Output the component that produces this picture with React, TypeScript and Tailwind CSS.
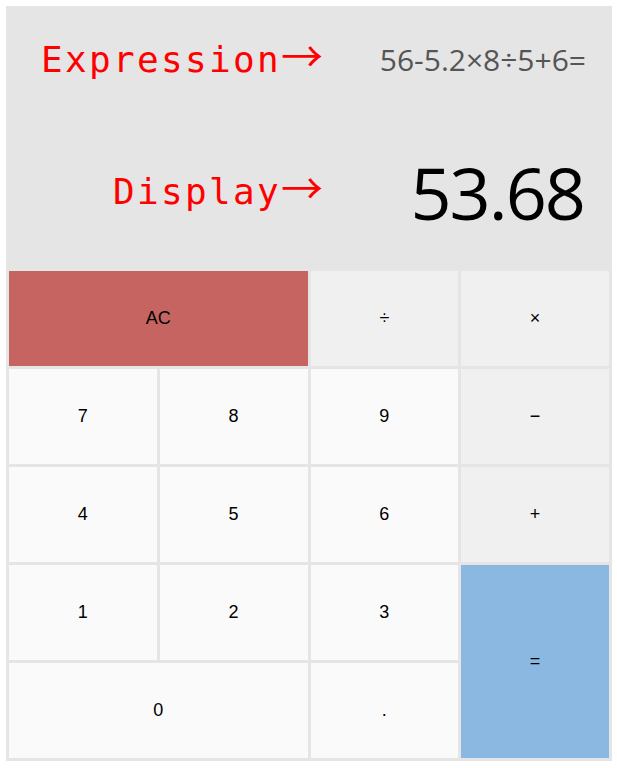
import React from "react";

const mono = { fontFamily: '"DejaVu Sans Mono", monospace' };
const arrowFont = {
  fontFamily: '"Noto Sans Mono CJK SC", "Noto Sans CJK SC", "DejaVu Sans Mono", monospace',
};

function Label({ text, top }: { text: string; top: string }) {
  return (
    <div
      className={`absolute right-[294px] ${top} text-[36px] leading-[40px] tracking-[2.33px] text-[#ff0000] whitespace-nowrap`}
      style={mono}
    >
      {text}
      <span className="text-[42px] leading-[0px] tracking-normal" style={arrowFont}>
        →
      </span>
    </div>
  );
}

export default function App() {
  const num = "bg-[#fafafa]";
  const op = "bg-[#f0f0f0]";
  return (
    <div className="relative w-[617px] h-[768px] bg-white">
      <div className="absolute left-[6px] top-[6px] w-[606px] h-[755px] bg-[#e5e5e5] flex flex-col">
        <div
          className="flex flex-col items-end pr-[26px] pt-[34px] h-[263px]"
          style={{ fontFamily: '"Open Sans", sans-serif' }}
        >
          <div className="text-[30px] leading-[40px] text-[#555555]">56-5.2×8÷5+6=</div>
          <div className="mt-[72px] mr-[2px] text-[72px] leading-[80px] tracking-[-2px] text-black">
            53.68
          </div>
        </div>
        <div
          className="grid grid-cols-4 grid-rows-[repeat(5,95px)] gap-[3px] p-[3px] text-[18px] text-black"
          style={{ fontFamily: '"Liberation Sans", Arial, sans-serif' }}
        >
          <div className="col-span-2 bg-[#c66462] flex items-center justify-center">AC</div>
          <div className={`${op} flex items-center justify-center`}>÷</div>
          <div className={`${op} flex items-center justify-center`}>×</div>
          <div className={`${num} flex items-center justify-center`}>7</div>
          <div className={`${num} flex items-center justify-center`}>8</div>
          <div className={`${num} flex items-center justify-center`}>9</div>
          <div className={`${op} flex items-center justify-center`}>−</div>
          <div className={`${num} flex items-center justify-center`}>4</div>
          <div className={`${num} flex items-center justify-center`}>5</div>
          <div className={`${num} flex items-center justify-center`}>6</div>
          <div className={`${op} flex items-center justify-center`}>+</div>
          <div className={`${num} flex items-center justify-center`}>1</div>
          <div className={`${num} flex items-center justify-center`}>2</div>
          <div className={`${num} flex items-center justify-center`}>3</div>
          <div className="row-span-2 bg-[#8ab8e0] flex items-center justify-center">=</div>
          <div className={`col-span-2 ${num} flex items-center justify-center`}>0</div>
          <div className={`${num} flex items-center justify-center`}>.</div>
        </div>
      </div>
      <Label text="Expression" top="top-[40px]" />
      <Label text="Display" top="top-[172px]" />
    </div>
  );
}
